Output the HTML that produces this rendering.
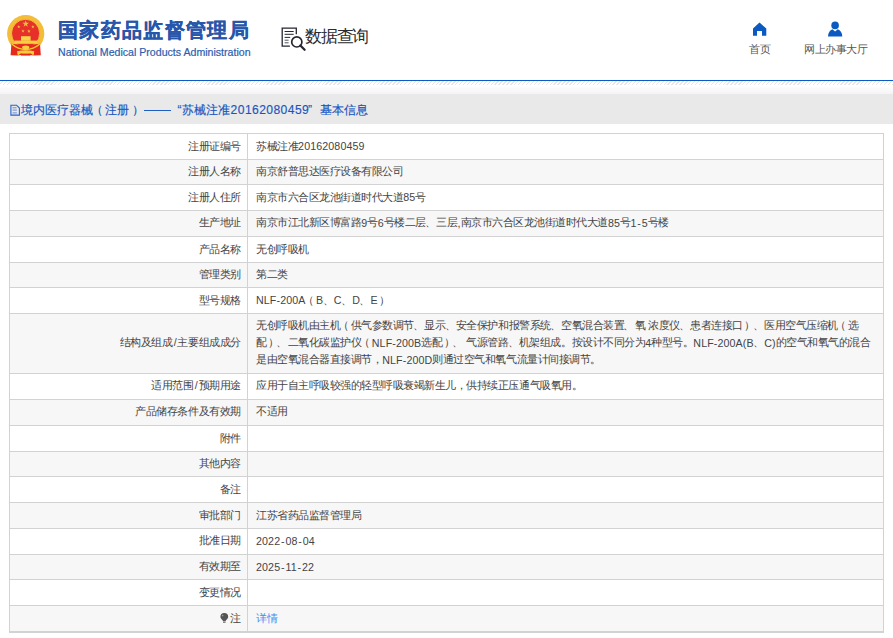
<!DOCTYPE html>
<html><head><meta charset="utf-8"><style>
html,body{margin:0;padding:0;}
body{text-spacing-trim:space-all;width:893px;height:638px;overflow:hidden;position:relative;background:#fff;font-family:"Liberation Sans",sans-serif;}
.abs{position:absolute;white-space:nowrap;}
.title{position:absolute;left:58.2px;top:14.3px;font-size:19.6px;line-height:32px;font-weight:700;-webkit-text-stroke:0.25px #2856aa;color:#2856aa;white-space:nowrap;letter-spacing:1.3px}
.sub{position:absolute;left:58px;top:44.6px;font-size:10.6px;line-height:14px;color:#2c5db0;white-space:nowrap;-webkit-text-stroke:0.2px #2c5db0}
.sq{position:absolute;left:305px;top:27px;font-size:17px;line-height:20px;color:#2a2a30;white-space:nowrap;letter-spacing:-1.2px}
.nav{position:absolute;top:41px;font-size:10.66px;line-height:16px;color:#555;white-space:nowrap;letter-spacing:-0.48px}
.bl{position:absolute;left:0;top:80px;width:893px;height:1px;background:#0a5cc2;}
.hatch{position:absolute;left:0;top:81px;width:893px;height:4px;background:repeating-linear-gradient(135deg,#fff 0,#fff 1.85px,#e6e6e6 1.85px,#e6e6e6 2.78px);}
.grad{position:absolute;left:0;top:85px;width:893px;height:9px;background:linear-gradient(#fff,#f4f4f4);}
.band{position:absolute;left:0;top:94px;width:893px;height:30px;background:#e9e9e9;}
.bandt{position:absolute;top:101.5px;font-size:12.1px;line-height:17px;color:#1756c0;-webkit-text-stroke:0.15px #1756c0;white-space:nowrap;}
.dg{letter-spacing:0.42px;top:102px}
.row{position:absolute;left:9px;width:875px;}
.hl{position:absolute;left:9px;width:875px;height:1px;background:#d2d2d2;}
.vl{position:absolute;width:1px;background:#d2d2d2;}
.lab{position:absolute;right:652.4px;font-size:10.66px;line-height:17px;color:#444;white-space:nowrap;text-align:right;letter-spacing:-0.48px}
.val{position:absolute;left:256px;font-size:10.66px;line-height:17px;color:#444;white-space:nowrap;letter-spacing:-0.48px}
.link{color:#4b8cf0;}
.a{letter-spacing:0.12px;position:relative;top:0.6px}
.sp{display:inline-block;width:2.9px}
.sl{margin:0 1.25px}
.hy{margin:0 0.8px}
.lp{position:relative;left:-2.3px}
.rp{position:relative;left:1.2px}
.dn{position:relative;left:-0.8px}
.bulb{display:inline-block;width:8px;height:10px;border-radius:50% 50% 40% 40%;background:#555;vertical-align:-1px;margin-right:1px}
</style></head><body>
<svg width="50" height="60" viewBox="0 0 50 60" style="position:absolute;left:0;top:0">
<circle cx="25.7" cy="33.6" r="18.6" fill="#f3bd3a"/>
<circle cx="25.6" cy="33.4" r="14.1" fill="#e8302a"/>
<circle cx="25.6" cy="33.4" r="14.1" fill="none" stroke="#f6d23a" stroke-width="0.8"/>
<path d="M11.4 43.8 Q25.7 46 40 43.8 L40.8 55.3 L34 55.6 L25.7 54.6 L17.4 55.6 L10.6 55.3 Z" fill="#e42a1c"/>
<rect x="21" y="36.2" width="9.6" height="4.6" fill="#f7d24a"/>
<rect x="14.5" y="40.6" width="22.8" height="3.2" fill="#f6cf3e"/>
<path d="M11.8 44 Q18 49.5 25.7 49.5 Q33.4 49.5 39.8 44" fill="none" stroke="#f4c634" stroke-width="1.6"/>
<ellipse cx="25.7" cy="47.5" rx="3.6" ry="1.9" fill="#f6cf3e"/>
<path d="M17 51.2 Q25.7 49.4 34.2 51.2 L33.6 55.6 L31 53.6 Q25.7 55 20.5 53.6 L17.8 55.6 Z" fill="#f4cd3c"/>
<rect x="21" y="53.6" width="9.4" height="2" fill="#e42a1c"/>
<polygon points="25.70,20.30 26.52,22.67 29.03,22.72 27.03,24.23 27.76,26.63 25.70,25.20 23.64,26.63 24.37,24.23 22.37,22.72 24.88,22.67" fill="#e6c23c"/>
<polygon points="18.80,25.00 19.22,26.22 20.51,26.24 19.48,27.02 19.86,28.26 18.80,27.52 17.74,28.26 18.12,27.02 17.09,26.24 18.38,26.22" fill="#e6c23c"/>
<polygon points="32.90,25.10 33.32,26.32 34.61,26.34 33.58,27.12 33.96,28.36 32.90,27.62 31.84,28.36 32.22,27.12 31.19,26.34 32.48,26.32" fill="#e6c23c"/>
<polygon points="23.00,29.20 23.42,30.42 24.71,30.44 23.68,31.22 24.06,32.46 23.00,31.72 21.94,32.46 22.32,31.22 21.29,30.44 22.58,30.42" fill="#e6c23c"/>
<polygon points="28.90,29.40 29.32,30.62 30.61,30.64 29.58,31.42 29.96,32.66 28.90,31.92 27.84,32.66 28.22,31.42 27.19,30.64 28.48,30.62" fill="#e6c23c"/>
</svg>
<div class="title">国家药品监督管理局</div>
<div class="sub">National Medical Products Administration</div>
<svg width="28" height="28" viewBox="0 0 28 28" style="position:absolute;left:280px;top:26px">
<path d="M9.9 20.1 H2.2 V2.2 H16.3 V8.3" fill="none" stroke="#262633" stroke-width="1.3"/>
<path d="M4.6 5.5 H13.7 M4.6 8.3 H13.7 M4.6 11.4 H10.2" stroke="#262633" stroke-width="1"/>
<path d="M4.6 14.2 H8.6 M4.6 16.8 H8.6" stroke="#55555f" stroke-width="1"/>
<circle cx="16.8" cy="15.9" r="5.1" fill="none" stroke="#262633" stroke-width="1.7"/>
<path d="M20.4 19.5 L24.6 23.7" stroke="#262633" stroke-width="2.3" stroke-linecap="round"/>
</svg>
<div class="sq">数据查询</div>
<svg width="16" height="16" viewBox="0 0 16 16" style="position:absolute;left:752px;top:21px">
<path d="M7.5 1.5 L14.3 7.4 V14.8 H10 V10.1 H5 V14.8 H1 V7.4 Z" fill="#0b5ac2"/>
</svg><svg width="18" height="16" viewBox="0 0 18 16" style="position:absolute;left:826px;top:21px">
<circle cx="9.1" cy="4.4" r="3.8" fill="#0b5ac2"/>
<path d="M2 15.4 Q2.5 9.6 6.4 8.3 L9.1 10.6 L11.8 8.3 Q15.8 9.6 16.3 15.4 Z" fill="#0b5ac2"/>
</svg>
<div class="nav" style="left:749px">首页</div>
<div class="nav" style="left:804px">网上办事大厅</div>
<div class="bl"></div><div class="hatch"></div><div class="grad"></div>
<div class="band"></div>
<svg width="12" height="13" viewBox="0 0 12 13" style="position:absolute;left:9px;top:103.5px">
<path d="M1.9 1.2 H7.6 L10.4 4 V11.1 H1.9 Z" fill="none" stroke="#2563d0" stroke-width="1.1"/>
<path d="M3.5 3.8 H7.6 M3.5 6.1 H7.9 M3.5 8.9 H7.9" stroke="#5a7fd0" stroke-width="0.9"/>
</svg>
<div class="bandt" style="left:21px">境内医疗器械<span style="position:relative;left:-2px">（</span>注册<span style="position:relative;left:2.5px">）</span></div>
<div style="position:absolute;left:144px;top:110px;width:26.6px;height:1.2px;background:#1f5fc4"></div>
<div class="bandt" style="left:177.5px">“</div>
<div class="bandt" style="left:182px">苏械注准</div>
<div class="bandt dg" style="left:230.6px">20162080459</div>
<div class="bandt" style="left:308px">”</div>
<div class="bandt" style="left:320px">基本信息</div>
<div class="row" style="top:133px;height:26px;background:#ffffff"></div>
<div class="lab" style="top:137.55px">注册证编号</div>
<div class="val" style="top:137.55px">苏械注准<span class="a">20162080459</span></div>
<div class="row" style="top:159px;height:25px;background:#f7f7f7"></div>
<div class="lab" style="top:163.05px">注册人名称</div>
<div class="val" style="top:163.05px">南京舒普思达医疗设备有限公司</div>
<div class="row" style="top:184px;height:26px;background:#ffffff"></div>
<div class="lab" style="top:188.50px">注册人住所</div>
<div class="val" style="top:188.50px">南京市六合区龙池街道时代大道<span class="a">85</span>号</div>
<div class="row" style="top:210px;height:26px;background:#f7f7f7"></div>
<div class="lab" style="top:214.45px">生产地址</div>
<div class="val" style="top:214.45px">南京市江北新区博富路<span class="a">9</span>号<span class="a">6</span>号楼二层<span class="dn">、</span>三层<span class="a">,</span>南京市六合区龙池街道时代大道<span class="a">85</span>号<span class="a">1<span class="hy">-</span>5</span>号楼</div>
<div class="row" style="top:236px;height:26px;background:#ffffff"></div>
<div class="lab" style="top:240.50px">产品名称</div>
<div class="val" style="top:240.50px">无创呼吸机</div>
<div class="row" style="top:262px;height:25px;background:#f7f7f7"></div>
<div class="lab" style="top:266.00px">管理类别</div>
<div class="val" style="top:266.00px">第二类</div>
<div class="row" style="top:287px;height:26px;background:#ffffff"></div>
<div class="lab" style="top:291.50px">型号规格</div>
<div class="val" style="top:291.50px"><span class="a">NLF-200A</span><span class="lp">（</span><span class="a">B</span><span class="dn">、</span><span class="a">C</span><span class="dn">、</span><span class="a">D</span><span class="dn">、</span><span class="a">E</span><span class="rp">）</span></div>
<div class="row" style="top:313px;height:60px;background:#f7f7f7"></div>
<div class="lab" style="top:334.45px">结构及组成<span class="sl">/</span>主要组成成分</div>
<div class="val" style="top:317.45px">无创呼吸机由主机<span class="lp">（</span>供气参数调节<span class="dn">、</span>显示<span class="dn">、</span>安全保护和报警系统<span class="dn">、</span>空氧混合装置<span class="dn">、</span>氧<span class="sp"></span>浓度仪<span class="dn">、</span>患者连接口<span class="rp">）</span><span class="dn">、</span>医用空气压缩机<span class="lp">（</span>选</div>
<div class="val" style="top:334.45px">配<span class="rp">）</span><span class="dn">、</span>二氧化碳监护仪<span class="lp">（</span><span class="a">NLF-200B</span>选配<span class="rp">）</span><span class="dn">、</span><span class="sp"></span>气源管路<span class="dn">、</span>机架组成。按设计不同分为<span class="a">4</span>种型号。<span class="a">NLF-200A(B</span><span class="dn">、</span><span class="a">C)</span>的空气和氧气的混合</div>
<div class="val" style="top:351.45px">是由空氧混合器直接调节，<span class="a">NLF-200D</span>则通过空气和氧气流量计间接调节。</div>
<div class="row" style="top:373px;height:26px;background:#ffffff"></div>
<div class="lab" style="top:377.40px">适用范围<span class="sl">/</span>预期用途</div>
<div class="val" style="top:377.40px">应用于自主呼吸较强的轻型呼吸衰竭新生儿，供持续正压通气吸氧用。</div>
<div class="row" style="top:399px;height:26px;background:#f7f7f7"></div>
<div class="lab" style="top:403.45px">产品储存条件及有效期</div>
<div class="val" style="top:403.45px">不适用</div>
<div class="row" style="top:425px;height:26px;background:#ffffff"></div>
<div class="lab" style="top:429.50px">附件</div>
<div class="row" style="top:451px;height:25px;background:#f7f7f7"></div>
<div class="lab" style="top:455.00px">其他内容</div>
<div class="row" style="top:476px;height:26px;background:#ffffff"></div>
<div class="lab" style="top:480.50px">备注</div>
<div class="row" style="top:502px;height:26px;background:#f7f7f7"></div>
<div class="lab" style="top:506.50px">审批部门</div>
<div class="val" style="top:506.50px">江苏省药品监督管理局</div>
<div class="row" style="top:528px;height:26px;background:#ffffff"></div>
<div class="lab" style="top:532.45px">批准日期</div>
<div class="val" style="top:532.45px"><span class="a">2022<span class="hy">-</span>08<span class="hy">-</span>04</span></div>
<div class="row" style="top:554px;height:25px;background:#f7f7f7"></div>
<div class="lab" style="top:558.00px">有效期至</div>
<div class="val" style="top:558.00px"><span class="a">2025<span class="hy">-</span>11<span class="hy">-</span>22</span></div>
<div class="row" style="top:579px;height:26px;background:#ffffff"></div>
<div class="lab" style="top:583.50px">变更情况</div>
<div class="row" style="top:605px;height:26px;background:#f7f7f7"></div>
<svg width="9" height="11" viewBox="0 0 9 11" style="position:absolute;left:219.5px;top:612.5px"><path d="M2.6 7.2 Q0.4 5.6 0.4 4 A3.9 3.9 0 0 1 8.2 4 Q8.2 5.6 6 7.2 L5.6 8.2 H3 Z" fill="#555"/><rect x="3" y="8.6" width="2.6" height="1.4" fill="#8a8a8a"/><circle cx="2.6" cy="2.6" r="0.8" fill="#9aa"/></svg>
<div class="lab" style="top:609.50px">注</div>
<div class="val link" style="top:609.50px">详情</div>
<div class="hl" style="top:133px"></div>
<div class="hl" style="top:159px"></div>
<div class="hl" style="top:184px"></div>
<div class="hl" style="top:210px"></div>
<div class="hl" style="top:236px"></div>
<div class="hl" style="top:262px"></div>
<div class="hl" style="top:287px"></div>
<div class="hl" style="top:313px"></div>
<div class="hl" style="top:373px"></div>
<div class="hl" style="top:399px"></div>
<div class="hl" style="top:425px"></div>
<div class="hl" style="top:451px"></div>
<div class="hl" style="top:476px"></div>
<div class="hl" style="top:502px"></div>
<div class="hl" style="top:528px"></div>
<div class="hl" style="top:554px"></div>
<div class="hl" style="top:579px"></div>
<div class="hl" style="top:605px"></div>
<div class="hl" style="top:631px;height:2px"></div>
<div class="vl" style="left:9px;top:133px;height:500px"></div>
<div class="vl" style="left:247px;top:133px;height:499px"></div>
<div class="vl" style="left:883px;top:133px;height:500px"></div>
</body></html>
